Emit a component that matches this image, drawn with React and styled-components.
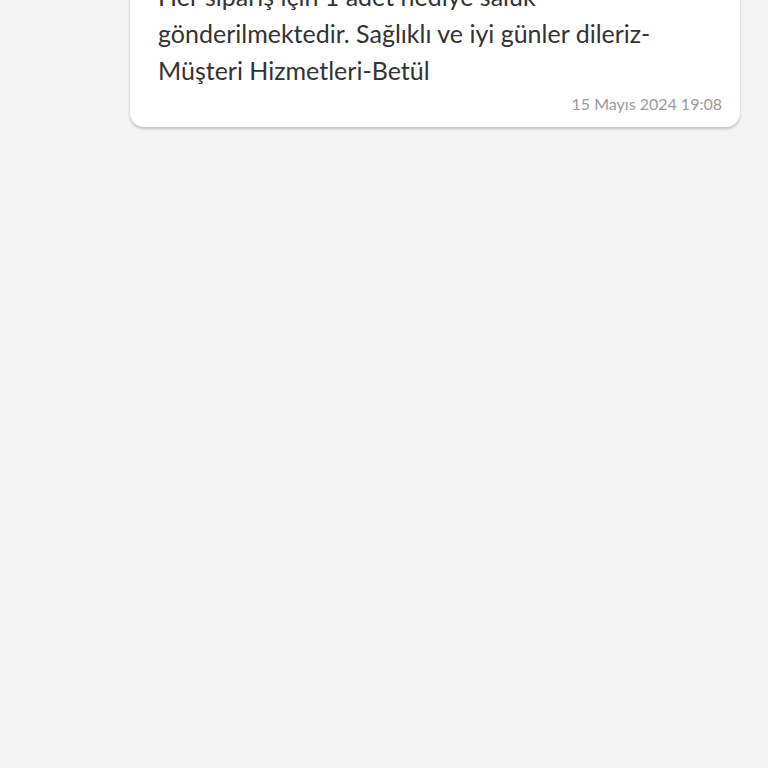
import styled, { createGlobalStyle } from 'styled-components';

const GlobalStyle = createGlobalStyle`
  html, body {
    margin: 0;
    padding: 0;
    background: #f4f4f4;
  }
  body {
    font-family: 'Lato', 'Noto Sans', sans-serif;
  }
`;

const ChatScreen = styled.div`
  height: 768px;
  overflow: hidden;
  background: #f4f4f4;
`;

const MessageList = styled.div`
  display: flex;
  flex-direction: column;
  gap: 16px;
  padding: 0 28px 0 130px;
  margin-top: -36px;
`;

const Bubble = styled.div`
  background: #fff;
  border-radius: 14px;
  box-shadow: 0 2px 3px rgba(0, 0, 0, 0.22);
  padding: 14px 18px 11px 28px;
`;

const MessageText = styled.p`
  margin: 0;
  font-size: 25px;
  line-height: 37px;
  color: #333;
  white-space: pre-line;
`;

const Time = styled.div`
  margin-top: 3px;
  text-align: right;
  font-size: 16px;
  line-height: 24px;
  color: #9a9a9a;
`;

const Message = ({ text, time }) => (
  <Bubble>
    <MessageText>{text}</MessageText>
    <Time>{time}</Time>
  </Bubble>
);

export default function App() {
  return (
    <>
      <GlobalStyle />
      <ChatScreen>
        <MessageList>
          <Message
            text={'Her sipariş için 1 adet hediye saluk\ngönderilmektedir. Sağlıklı ve iyi günler dileriz-\nMüşteri Hizmetleri-Betül'}
            time="15 Mayıs 2024 19:08"
          />
        </MessageList>
      </ChatScreen>
    </>
  );
}
